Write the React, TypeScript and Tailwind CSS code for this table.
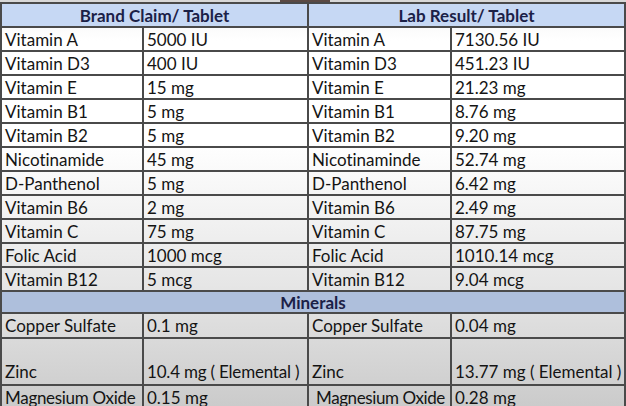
import React from "react";

type Row = { a: string; b: string; c: string; d: string };

const vitamins: Row[] = [
  { a: "Vitamin A", b: "5000 IU", c: "Vitamin A", d: "7130.56 IU" },
  { a: "Vitamin D3", b: "400 IU", c: "Vitamin D3", d: "451.23 IU" },
  { a: "Vitamin E", b: "15 mg", c: "Vitamin E", d: "21.23 mg" },
  { a: "Vitamin B1", b: "5 mg", c: "Vitamin B1", d: "8.76 mg" },
  { a: "Vitamin B2", b: "5 mg", c: "Vitamin B2", d: "9.20 mg" },
  { a: "Nicotinamide", b: "45 mg", c: "Nicotinaminde", d: "52.74 mg" },
  { a: "D-Panthenol", b: "5 mg", c: "D-Panthenol", d: "6.42 mg" },
  { a: "Vitamin B6", b: "2 mg", c: "Vitamin B6", d: "2.49 mg" },
  { a: "Vitamin C", b: "75 mg", c: "Vitamin C", d: "87.75 mg" },
  { a: "Folic Acid", b: "1000 mcg", c: "Folic Acid", d: "1010.14 mcg" },
  { a: "Vitamin B12", b: "5 mcg", c: "Vitamin B12", d: "9.04 mcg" },
];

const cell = "border-2 border-[#4a4a4a] px-[3px] leading-none whitespace-nowrap overflow-hidden";

const App: React.FC = () => {
  return (
    <div
      className="w-[626px] h-[406px] overflow-hidden bg-[linear-gradient(to_bottom,#f2f2f2_0%,#ffffff_10%,#ffffff_35%,#e6e6e6_70%,#cbcbcb_100%)] text-[#141414] [font-variant-ligatures:none]"
      style={{ fontFamily: "Lato, 'Open Sans', sans-serif" }}
    >
      {/* strip of the video frame above the table */}
      <div className="flex h-[2px]">
        <div className="w-[280px] bg-[#d8d8d8]" />
        <div className="w-[50px] bg-[#5b4a44]" />
        <div className="flex-1 bg-[#d8d8d8]" />
      </div>
      <table className="table-fixed border-collapse w-[624px] text-[17px]">
        <colgroup>
          <col className="w-[142px]" />
          <col className="w-[165px]" />
          <col className="w-[143px]" />
          <col className="w-[174px]" />
        </colgroup>
        <tbody>
          <tr className="h-[24px] bg-[#c6d8f4] font-bold text-[#1b2147] text-[17px]">
            <td colSpan={2} className={`${cell} text-center`}>Brand Claim/ Tablet</td>
            <td colSpan={2} className={`${cell} text-center`}>Lab Result/ Tablet</td>
          </tr>
          {vitamins.map((r) => (
            <tr key={r.a} className="h-[24px]">
              <td className={cell}>{r.a}</td>
              <td className={cell}>{r.b}</td>
              <td className={cell}>{r.c}</td>
              <td className={cell}>{r.d}</td>
            </tr>
          ))}
          <tr className="h-[22px] bg-[#aebfdc] font-bold text-[#1b2147] text-[17px]">
            <td colSpan={4} className={`${cell} text-center`}>Minerals</td>
          </tr>
          <tr className="h-[25px]">
            <td className={cell}>Copper Sulfate</td>
            <td className={cell}>0.1 mg</td>
            <td className={cell}>Copper Sulfate</td>
            <td className={cell}>0.04 mg</td>
          </tr>
          <tr className="h-[47px]">
            <td className={`${cell} align-bottom pb-[4px]`}>Zinc</td>
            <td className={`${cell} align-bottom pb-[4px] tracking-[-0.2px]`}>10.4 mg ( Elemental )</td>
            <td className={`${cell} align-bottom pb-[4px]`}>Zinc</td>
            <td className={`${cell} align-bottom pb-[4px]`}>13.77 mg ( Elemental )</td>
          </tr>
          <tr className="h-[24px]">
            <td className={`${cell} tracking-[-0.3px]`}>Magnesium Oxide</td>
            <td className={cell}>0.15 mg</td>
            <td className={`${cell} pl-[7px] pr-0 tracking-[-0.4px]`}>Magnesium Oxide</td>
            <td className={cell}>0.28 mg</td>
          </tr>
        </tbody>
      </table>
    </div>
  );
};

export default App;
